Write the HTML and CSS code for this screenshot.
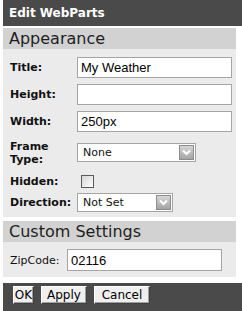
FILE: index.html
```html
<!DOCTYPE html>
<html>
<head>
<meta charset="utf-8">
<title>Edit WebParts</title>
<link rel="stylesheet" href="styles.css">
</head>
<body>
<div class="editor">
  <div class="titlebar">Edit WebParts</div>

  <div class="section">
    <div class="section-head">Appearance</div>
    <div class="section-body">
      <div class="row">
        <span class="lbl">Title:</span>
        <input class="text" type="text" value="My Weather">
      </div>
      <div class="row">
        <span class="lbl">Height:</span>
        <input class="text" type="text" value="">
      </div>
      <div class="row">
        <span class="lbl">Width:</span>
        <input class="text" type="text" value="250px">
      </div>
      <div class="row row-frame">
        <span class="lbl">Frame<br>Type:</span>
        <div class="select select-frame">
          <span class="select-value">None</span>
          <span class="select-arrow"><svg width="13" height="13" viewBox="0 0 13 13"><path d="M3 4.5 L6.5 8 L10 4.5" fill="none" stroke="#fff" stroke-width="2"/></svg></span>
        </div>
      </div>
      <div class="row row-check">
        <span class="lbl">Hidden:</span>
        <span class="checkbox"></span>
      </div>
      <div class="row row-dir">
        <span class="lbl">Direction:</span>
        <div class="select select-dir">
          <span class="select-value">Not Set</span>
          <span class="select-arrow"><svg width="13" height="13" viewBox="0 0 13 13"><path d="M3 4.5 L6.5 8 L10 4.5" fill="none" stroke="#fff" stroke-width="2"/></svg></span>
        </div>
      </div>
    </div>
  </div>

  <div class="section section-custom">
    <div class="section-head">Custom Settings</div>
    <div class="section-body section-body-zip">
      <div class="zip-row">
        <span class="zip-lbl">ZipCode:</span>
        <input class="text text-zip" type="text" value="02116">
      </div>
    </div>
  </div>

  <div class="footer">
    <button class="btn btn-ok">OK</button>
    <button class="btn btn-apply">Apply</button>
    <button class="btn btn-cancel">Cancel</button>
  </div>
</div>
</body>
</html>
```

FILE: styles.css
```css
html, body {
  margin: 0;
  padding: 0;
  background: #ffffff;
}

.editor {
  margin-left: 3px;
  width: 239px;
  font-family: "DejaVu Sans", Verdana, sans-serif;
  color: #1a1a1a;
}

.titlebar {
  height: 26px;
  line-height: 26px;
  background: #4a4a4a;
  color: #ffffff;
  font-weight: bold;
  font-size: 12px;
  padding-left: 6px;
  margin-bottom: 2px;
}

.section {
  margin-right: 6px;
}

.section-custom {
  margin-top: 4px;
}

.section-head {
  height: 21px;
  line-height: 21px;
  background: #d2d2d2;
  font-size: 16px;
  padding-left: 6px;
  color: #1e1e1e;
}

.section-body {
  background: #ebebeb;
  padding: 5px 4px 4px 7px;
}

.row {
  display: flex;
  align-items: center;
  height: 27px;
}

.row-frame { height: 35px; }
.row-check { height: 22px; }
.row-dir { height: 21px; }

.lbl {
  flex: none;
  width: 67px;
  font-weight: bold;
  font-size: 11px;
  line-height: 13px;
  color: #111;
}

.text {
  box-sizing: border-box;
  width: 155px;
  height: 21px;
  margin: 0;
  border: 1px solid #a5a5a5;
  background: #ffffff;
  padding: 0 3px;
  font-family: "Liberation Sans", Arial, sans-serif;
  font-size: 13px;
  color: #000;
  outline: none;
}

.select {
  box-sizing: border-box;
  height: 19px;
  border: 1px solid #a5a5a5;
  background: #ffffff;
  display: flex;
  align-items: center;
  justify-content: space-between;
  padding: 0 1px 0 5px;
}

.select-frame { width: 119px; }
.select-dir { width: 96px; }

.select-value {
  font-size: 11px;
  color: #111;
}

.select-arrow {
  box-sizing: border-box;
  width: 15px;
  height: 15px;
  border: 1px solid #8c8c8c;
  background: linear-gradient(#d6d6d6, #a4a4a4);
  display: flex;
  align-items: center;
  justify-content: center;
}

.checkbox {
  box-sizing: border-box;
  width: 13px;
  height: 13px;
  margin-left: 4px;
  border: 1px solid #5a5a5a;
  background: linear-gradient(135deg, #d4d4d4, #ffffff);
}

.section-body-zip {
  padding: 7px 4px 6px 7px;
}

.zip-row {
  display: flex;
  align-items: center;
}

.zip-lbl {
  width: 57px;
  flex: none;
  font-size: 11px;
  color: #111;
}

.text-zip {
  height: 22px;
}

.footer {
  margin-top: 6px;
  height: 28px;
  box-sizing: border-box;
  background: #4a4a4a;
  padding: 3px 0 0 10px;
  display: flex;
  align-items: flex-start;
  gap: 7px;
}

.btn {
  box-sizing: border-box;
  height: 18px;
  margin: 0;
  padding: 0;
  background: #efefef;
  border: 1px solid;
  border-color: #ffffff #404040 #404040 #ffffff;
  box-shadow: inset -1px -1px 0 #a0a0a0;
  font-family: "DejaVu Sans", Verdana, sans-serif;
  font-size: 12px;
  line-height: 15px;
  color: #000;
}

.btn-ok { width: 21px; }
.btn-apply { width: 46px; }
.btn-cancel { width: 56px; }
```
